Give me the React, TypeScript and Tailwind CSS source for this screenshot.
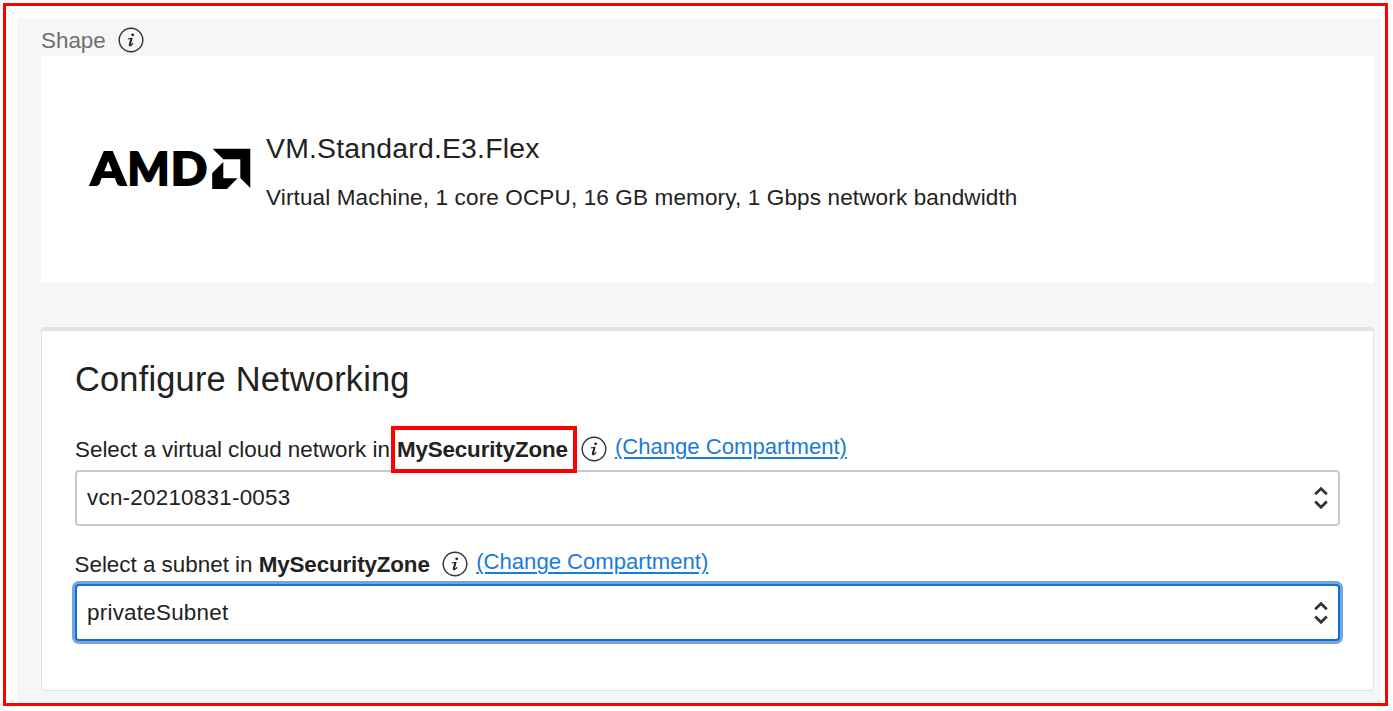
import React from "react";

function InfoIcon() {
  return (
    <svg className="block h-[26px] w-[26px] shrink-0" viewBox="0 0 26 26" role="img" aria-label="Information">
      <circle cx="13" cy="13" r="11.8" fill="none" stroke="#333333" strokeWidth="1.4" />
      <circle cx="14.7" cy="7.8" r="1.4" fill="#222222" />
      <path d="M10.3 11.9c1.3-.3 2.5-.6 3.7-.7" fill="none" stroke="#222222" strokeWidth="1.1" strokeLinecap="round" />
      <path d="M13.5 11.5l-1.8 5.9c-.3 1.1.1 1.5.8 1.2 1-.4 1.7-1.1 2.3-1.9" fill="none" stroke="#222222" strokeWidth="1.2" strokeLinecap="round" />
      <path d="M13.4 12l-1.7 5.9" fill="none" stroke="#222222" strokeWidth="1.9" strokeLinecap="round" />
    </svg>
  );
}

function AmdLogo() {
  return (
    <svg className="mt-[78px] ml-[-8px] block h-[68px] w-[171px] shrink-0" viewBox="-8 -12 171 68" role="img" aria-label="AMD">
      <g fill="#000000" stroke="#000000" strokeWidth="1.8" fontFamily="Lato, 'Liberation Sans', sans-serif" fontWeight="900" fontSize="46.5">
        <text x="1.8" y="38.7" textLength="35" lengthAdjust="spacingAndGlyphs">A</text>
        <text x="38.6" y="38.7" textLength="42" lengthAdjust="spacingAndGlyphs">M</text>
        <text x="81.8" y="38.7" textLength="36.5" lengthAdjust="spacingAndGlyphs">D</text>
      </g>
      <path d="M123.7 2.7h37.6v39.3l-10-10V13.3H134.3zM123.2 26.9l11.1-11v16.4h14.2L138 43h-14.8z" />
    </svg>
  );
}

function SelectBox({ value, focused = false }: { value: string; focused?: boolean }) {
  return (
    <button
      type="button"
      className={
        focused
          ? "flex h-[57px] w-[1265px] items-center justify-between rounded-[4px] border-2 border-[#1670c9] bg-white pr-[10px] pl-[10px] text-left ring-[3px] ring-[#74a5e0]"
          : "flex h-[56px] w-[1265px] items-center justify-between rounded-[4px] border-2 border-[#c6cad0] bg-white pr-[10px] pl-[10px] text-left"
      }
    >
      <span className="text-[22.4px] leading-[28px] tracking-[0.25px]">{value}</span>
      <svg className="block h-[26px] w-[14px]" viewBox="0 0 14 26" fill="none" stroke="#333333" strokeWidth="2.8">
        <path d="M1.2 9.2L7 3.6l5.8 5.6M1.2 16.6L7 22.2l5.8-5.6" />
      </svg>
    </button>
  );
}

function ChangeLink() {
  return (
    <a href="#" className="text-[22.1px] leading-[28px] whitespace-nowrap text-[#1a7bd8] underline decoration-[1.5px] underline-offset-[3px]">
      (Change Compartment)
    </a>
  );
}

export default function App() {
  return (
    <main className="h-[711px] w-[1393px] overflow-hidden bg-white pt-[3px] pl-[3px] font-['Liberation_Sans',Arial,sans-serif] text-[#222222]">
      <div className="h-[703px] w-[1385px] border-[3px] border-[#ff0000] pt-[12px] pl-[11px]">
        <div className="flex h-[685px] w-[1364px] flex-col bg-[#f6f6f6] pl-[24px]">
          <div className="flex h-[38px] items-center gap-[12px] pt-[7px]">
            <span className="text-[22.4px] leading-[28px] text-[#707070]">Shape</span>
            <span className="mt-[-1px]"><InfoIcon /></span>
          </div>

          <section className="flex h-[227px] w-[1333px] items-start bg-white pl-[48px]">
            <AmdLogo />
            <div className="pt-[74px] pl-[14px] whitespace-nowrap">
              <h2 className="text-[28.4px] leading-[36px] tracking-[0.2px]">VM.Standard.E3.Flex</h2>
              <p className="mt-[18px] text-[22.5px] leading-[28px] tracking-[0.14px]">
                Virtual Machine, 1 core OCPU, 16 GB memory, 1 Gbps network bandwidth
              </p>
            </div>
          </section>

          <section className="mt-[44px] flex h-[364px] w-[1333px] flex-col rounded-[4px] border border-t-4 border-[#e1e3e7] bg-white pl-[33px]">
            <h1 className="mt-[28px] text-[34.4px] leading-[40px] tracking-[0.2px]">Configure Networking</h1>
            <div className="mt-[37px] flex h-[34px] items-start whitespace-nowrap">
              <span className="text-[22.4px] leading-[28px]">Select a virtual cloud network in</span>
              <strong className="relative ml-[7px] text-[22.4px] leading-[28px] tracking-[-0.14px]">
                MySecurityZone
                <span className="absolute top-[-10px] left-[-6px] h-[47px] w-[186px] border-4 border-[#ff0000]" />
              </strong>
              <span className="ml-[13px]"><InfoIcon /></span>
              <span className="mt-[-3px] ml-[8px]"><ChangeLink /></span>
            </div>
            <SelectBox value="vcn-20210831-0053" />
            <div className="mt-[25px] flex h-[33px] items-start whitespace-nowrap">
              <span className="ml-[-0.5px] text-[22.4px] leading-[28px]">Select a subnet in <strong className="tracking-[-0.14px]">MySecurityZone</strong></span>
              <span className="ml-[12.5px]"><InfoIcon /></span>
              <span className="mt-[-3px] ml-[8px]"><ChangeLink /></span>
            </div>
            <SelectBox value="privateSubnet" focused />
          </section>
        </div>
      </div>
    </main>
  );
}
